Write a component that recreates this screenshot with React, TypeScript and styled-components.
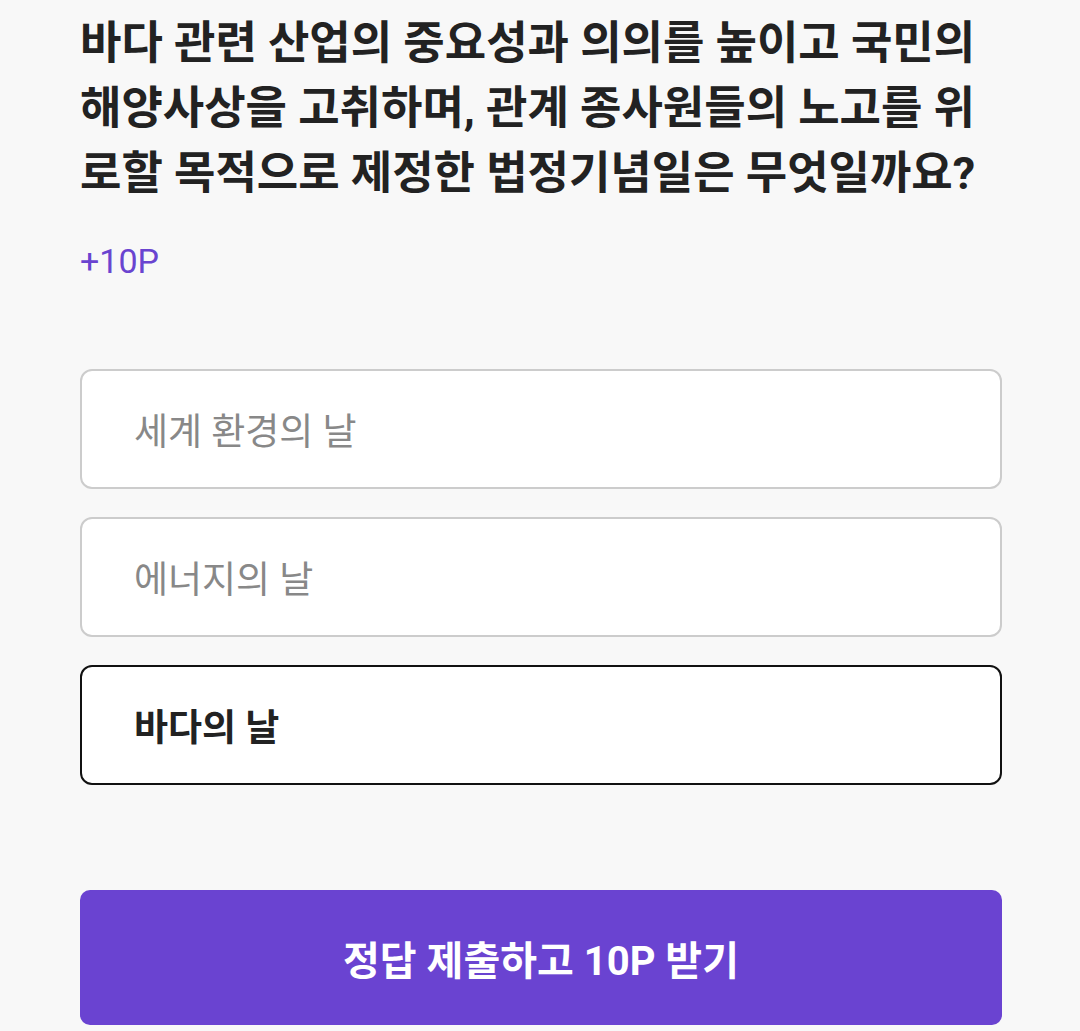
import React, { useState } from "react";
import styled, { createGlobalStyle } from "styled-components";

const Global = createGlobalStyle`
  html, body { margin: 0; padding: 0; background: #f8f8f8; }
  body { font-family: Roboto, "Noto Sans CJK KR", sans-serif; }
`;

const Page = styled.div`
  width: 922px;
  padding: 0 78px 0 80px;
  display: flex;
  flex-direction: column;
  background: #f8f8f8;
  min-height: 1031px;
  box-sizing: content-box;
`;

const Question = styled.h1`
  margin: 11px 0 0;
  font-size: 45px;
  line-height: 65px;
  font-weight: 700;
  color: #222222;
  letter-spacing: 0;
`;

const Points = styled.div`
  margin-top: 35px;
  font-size: 34px;
  line-height: 40px;
  color: #6a44d0;
`;

const Options = styled.div`
  margin-top: 88px;
  display: flex;
  flex-direction: column;
  gap: 28px;
`;

const Option = styled.button<{ $selected: boolean }>`
  height: 120px;
  box-sizing: border-box;
  border-radius: 12px;
  border: 2px solid ${(p) => (p.$selected ? "#111111" : "#cccccc")};
  background: #ffffff;
  padding: 0 0 0 52px;
  text-align: left;
  font-family: Roboto, "Noto Sans CJK KR", sans-serif;
  font-size: 37px;
  font-weight: ${(p) => (p.$selected ? 700 : 400)};
  color: ${(p) => (p.$selected ? "#222222" : "#888888")};
  cursor: pointer;
`;

const Submit = styled.button`
  margin-top: 105px;
  height: 135px;
  border: none;
  border-radius: 10px;
  background: #6a43d1;
  color: #ffffff;
  font-family: Roboto, "Noto Sans CJK KR", sans-serif;
  font-size: 40px;
  font-weight: 700;
  cursor: pointer;
`;

const options = ["세계 환경의 날", "에너지의 날", "바다의 날"];

export default function App() {
  const [selected, setSelected] = useState(2);
  return (
    <>
      <Global />
      <Page>
        <Question>
          바다 관련 산업의 중요성과 의의를 높이고 국민의 해양사상을 고취하며, 관계 종사원들의 노고를 위로할 목적으로 제정한 법정기념일은 무엇일까요?
        </Question>
        <Points>+10P</Points>
        <Options>
          {options.map((o, i) => (
            <Option key={o} $selected={selected === i} onClick={() => setSelected(i)}>
              {o}
            </Option>
          ))}
        </Options>
        <Submit>정답 제출하고 10P 받기</Submit>
      </Page>
    </>
  );
}
